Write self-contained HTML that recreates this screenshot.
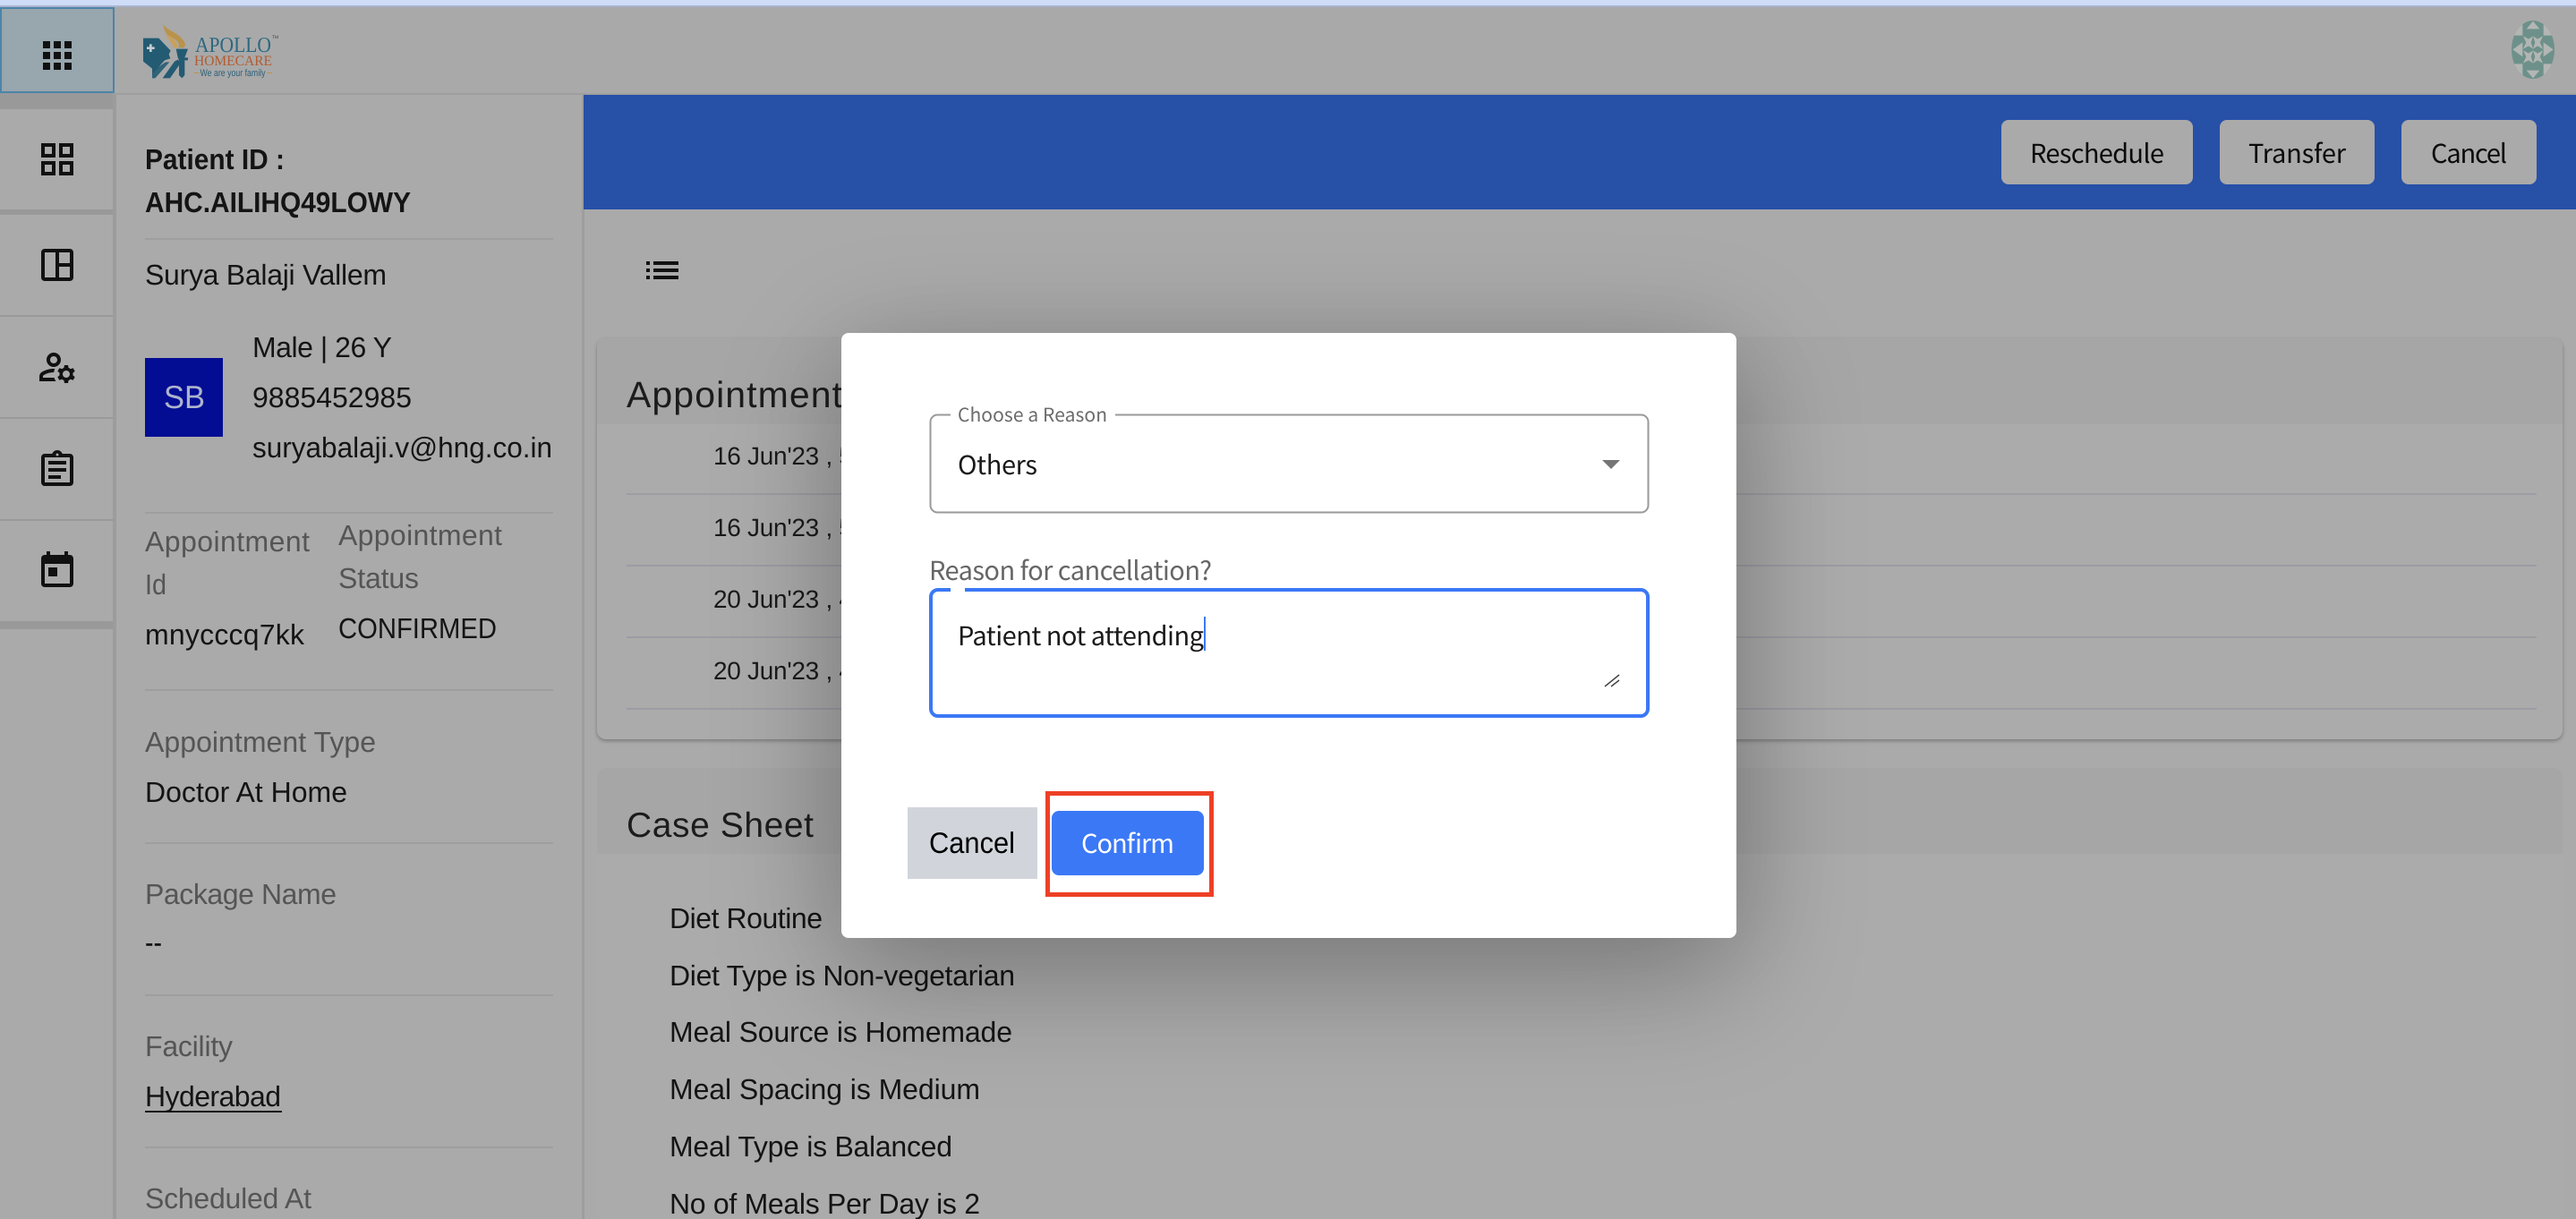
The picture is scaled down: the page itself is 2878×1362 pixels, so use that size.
<!DOCTYPE html>
<html><head><meta charset="utf-8"><title>Cancel appointment</title>
<style>
html,body{margin:0;padding:0;background:#aaa;width:2878px;height:1362px;overflow:hidden}
svg{display:block;overflow:hidden}
text{font-family:"Liberation Sans",sans-serif;font-size:32px;fill:#141414;text-rendering:geometricPrecision}
.b{font-weight:700}
.l{fill:#555}
.n{font-family:"Noto Sans CJK JP","Liberation Sans",sans-serif;font-size:29px}
.h{font-size:39px;fill:#1c1c1c}
.d{font-size:28px;fill:#1a1a1a}
</style></head><body>
<svg xmlns="http://www.w3.org/2000/svg" width="2878" height="1362" viewBox="0 0 2878 1362">
<defs>
<clipPath id="av"><ellipse cx="150" cy="137.5" rx="72" ry="97.5"/></clipPath>
<clipPath id="c1"><rect x="667" y="378" width="2196" height="448" rx="10"/></clipPath>
<clipPath id="c2"><path d="M667 868a10 10 0 0 1 10-10H2853a10 10 0 0 1 10 10V1362H667Z"/></clipPath>
</defs>
<rect width="2878" height="1362" fill="#aaa"/>
<rect width="2878" height="6" fill="#cfdcf7"/>
<rect y="6" width="2878" height="2" fill="#aab4cf"/>
<rect y="8" width="2878" height="96" fill="#a9a9a9"/>
<rect y="104" width="2878" height="2" fill="#9f9f9f"/>

<!-- sidebar -->
<rect x="0" y="104" width="126" height="1258" fill="#aaa"/>
<rect x="126" y="106" width="4" height="1256" fill="#9c9c9c"/>
<rect x="0" y="104" width="126" height="18" fill="#999"/>
<rect x="0" y="234" width="126" height="6" fill="#999"/>
<rect x="0" y="352" width="126" height="2" fill="#999"/>
<rect x="0" y="466" width="126" height="2" fill="#999"/>
<rect x="0" y="580" width="126" height="2" fill="#999"/>
<rect x="0" y="694" width="126" height="9" fill="#999"/>
<rect x="1" y="9" width="126" height="94" fill="#98a6ad" stroke="#4c84a8" stroke-width="2"/>
<g fill="#111">
<path transform="translate(40 38) scale(2)" d="M4 8h4V4H4v4zm6 12h4v-4h-4v4zm-6 0h4v-4H4v4zm0-6h4v-4H4v4zm6 0h4v-4h-4v4zm6-10v4h4V4h-4zm-6 4h4V4h-4v4zm6 6h4v-4h-4v4zm0 6h4v-4h-4v4z"/>
<path transform="translate(40 154) scale(2)" d="M3 3v8h8V3H3zm6 6H5V5h4v4zm-6 4v8h8v-8H3zm6 6H5v-4h4v4zm4-16v8h8V3h-8zm6 6h-4V5h4v4zm-6 4v8h8v-8h-8zm6 6h-4v-4h4v4z"/>
<path transform="translate(40 272) scale(2)" d="M19 3H5c-1.1 0-2 .9-2 2v14c0 1.1.9 2 2 2h14c1.1 0 2-.9 2-2V5c0-1.1-.9-2-2-2zM5 19V5h6v14H5zm14 0h-6v-6h6v6zm0-8h-6V5h6v6z"/>
<g transform="translate(40 386) scale(2)">
<path d="M4,18v-0.65c0-0.34,0.16-0.66,0.41-0.81C6.1,15.53,8.03,15,10,15c0.03,0,0.05,0,0.08,0.01c0.1-0.7,0.3-1.37,0.59-1.98 C10.45,13.01,10.23,13,10,13c-2.42,0-4.68,0.67-6.61,1.82C2.51,15.34,2,16.32,2,17.35V20h9.26c-0.42-0.6-0.75-1.28-0.97-2H4z"/>
<path d="M10,12c2.21,0,4-1.79,4-4s-1.79-4-4-4C7.79,4,6,5.79,6,8S7.79,12,10,12z M10,6c1.1,0,2,0.9,2,2s-0.9,2-2,2s-2-0.9-2-2 S8.9,6,10,6z"/>
<path d="M20.75,16c0-0.22-0.03-0.42-0.06-0.63l1.14-1.01l-1-1.73l-1.45,0.49c-0.32-0.27-0.68-0.48-1.08-0.63L18,11h-2l-0.3,1.49 c-0.4,0.15-0.76,0.36-1.08,0.63l-1.45-0.49l-1,1.73l1.14,1.01c-0.03,0.21-0.06,0.41-0.06,0.63s0.03,0.42,0.06,0.63l-1.14,1.01 l1,1.73l1.45-0.49c0.32,0.27,0.68,0.48,1.08,0.63L16,21h2l0.3-1.49c0.4-0.15,0.76-0.36,1.08-0.63l1.45,0.49l1-1.73l-1.14-1.01 C20.72,16.42,20.75,16.22,20.75,16z M17,18c-1.1,0-2-0.9-2-2s0.9-2,2-2s2,0.9,2,2S18.1,18,17,18z"/>
</g>
<path transform="translate(40 501) scale(2)" d="M7 15h7v2H7zm0-4h10v2H7zm0-4h10v2H7zm12-4h-4.18C14.4 1.84 13.3 1 12 1c-1.3 0-2.4.84-2.82 2H5c-.14 0-.27.01-.4.04-.39.08-.74.28-1.01.55-.18.18-.33.4-.43.64-.1.23-.16.49-.16.77v14c0 .27.06.54.16.78s.25.45.43.64c.27.27.62.47 1.01.55.13.02.26.03.4.03h14c1.1 0 2-.9 2-2V5c0-1.1-.9-2-2-2zm-7-.25c.41 0 .75.34.75.75s-.34.75-.75.75-.75-.34-.75-.75.34-.75.75-.75zM19 19H5V5h14v14z"/>
<path transform="translate(40 614) scale(2)" d="M19 3h-1V1h-2v2H8V1H6v2H5c-1.11 0-1.99.9-1.99 2L3 19c0 1.1.89 2 2 2h14c1.1 0 2-.9 2-2V5c0-1.1-.9-2-2-2zm0 16H5V8h14v11zM7 10h5v5H7z"/>
</g>

<!-- logo -->
<g transform="translate(140 10) scale(.33333)">
<path fill="#235b73" d="M60 98H112L152 140L146 152L151 166L132 172L90 218V200L60 176Z"/>
<path fill="#235b73" d="M90 208L135 178L148 178L100 232H90Z" opacity=".9"/>
<path fill="#235b73" d="M125 232L165 176L176 170L186 180L150 232Z"/>
<path fill="#235b73" d="M170 134H210L199 163H210V172H199V222L190 232L180 222V172L176 163Z"/>
<path fill="#b9934a" d="M127 47C130 70 170 75 190 100C205 115 201 125 196 130H178C186 110 165 100 146 90C131 82 128 60 127 47Z"/>
<path fill="#c9a05a" d="M137 85C155 98 172 100 176 130H160C160 110 140 105 137 85Z"/>
<path fill="#c6cbcf" d="M81 118H89V127H98V135H89V144H81V135H72V127H81Z"/>
</g>
<text x="218" y="58" style="font-family:'Liberation Serif',serif;font-size:24px;fill:#2c6880" textLength="85" lengthAdjust="spacingAndGlyphs">APOLLO</text>
<text x="217" y="73" style="font-family:'Liberation Serif',serif;font-size:16px;fill:#b25c2f" textLength="87" lengthAdjust="spacingAndGlyphs">HOMECARE</text>
<text x="223.500" y="85" style="font-size:11px;fill:#2c5f78" textLength="73" lengthAdjust="spacingAndGlyphs">We are your family</text>
<rect x="217" y="81" width="6" height="1" fill="#b9934a"/><rect x="298" y="81" width="6" height="1" fill="#b9934a"/>
<text x="304" y="43" style="font-size:5px;fill:#444">TM</text>

<!-- avatar -->
<g transform="translate(2806 23) scale(.3333) translate(-78 -40)" clip-path="url(#av)">
<rect x="78" y="40" width="144" height="195" fill="#6d918a"/>
<g fill="#b3b6b4">
<path d="M150 42L128 68H172Z"/><path d="M150 233L128 207H172Z"/>
<path d="M78 40H115V90H78Z"/><path d="M222 40H185V90H222Z"/>
<path d="M78 235H115V185H78Z"/><path d="M222 235H185V185H222Z"/>
<path d="M82 137L115 113V161Z"/><path d="M218 137L185 113V161Z"/>
<path d="M117 92L135 102L150 92L143 113L150 135L135 125L117 135L127 113Z"/>
<path d="M150 92L165 102L183 92L173 113L183 135L165 125L150 135L157 113Z"/>
<path d="M117 140L135 150L150 140L143 161L150 183L135 173L117 183L127 161Z"/>
<path d="M150 140L165 150L183 140L173 161L183 183L165 173L150 183L157 161Z"/>
</g></g>

<!-- left panel -->
<text class="b" x="162" y="189" textLength="156" lengthAdjust="spacingAndGlyphs">Patient ID :</text>
<text class="b" x="162" y="237" textLength="297" lengthAdjust="spacingAndGlyphs">AHC.AILIHQ49LOWY</text>
<rect x="162" y="266" width="456" height="2" fill="#9e9e9e"/>
<text x="162" y="318" textLength="270">Surya Balaji Vallem</text>
<rect x="162" y="400" width="87" height="88" fill="#020d94"/>
<text x="183" y="456" style="font-size:36px;fill:#aeb4cc" textLength="46" lengthAdjust="spacingAndGlyphs">SB</text>
<text x="282" y="399" textLength="156">Male | 26 Y</text>
<text x="282" y="455" textLength="178">9885452985</text>
<text x="282" y="511" textLength="335" lengthAdjust="spacingAndGlyphs">suryabalaji.v@hng.co.in</text>
<rect x="162" y="572" width="456" height="2" fill="#9e9e9e"/>
<text class="l" x="162" y="616" textLength="184">Appointment</text>
<text class="l" x="162" y="664" textLength="24" lengthAdjust="spacingAndGlyphs">Id</text>
<text x="162" y="720" textLength="178">mnycccq7kk</text>
<text class="l" x="378" y="609" textLength="183">Appointment</text>
<text class="l" x="378" y="657" textLength="90">Status</text>
<text x="378" y="713" textLength="177" lengthAdjust="spacingAndGlyphs">CONFIRMED</text>
<rect x="162" y="770" width="456" height="2" fill="#9e9e9e"/>
<text class="l" x="162" y="840" textLength="258">Appointment Type</text>
<text x="162" y="896" textLength="226">Doctor At Home</text>
<rect x="162" y="941" width="456" height="2" fill="#9e9e9e"/>
<text class="l" x="162" y="1010" textLength="214">Package Name</text>
<text x="162" y="1065" style="font-size:36px" textLength="19" lengthAdjust="spacingAndGlyphs">--</text>
<rect x="162" y="1111" width="456" height="2" fill="#9e9e9e"/>
<text class="l" x="162" y="1180" textLength="98">Facility</text>
<text x="162" y="1236" textLength="152">Hyderabad</text>
<rect x="162" y="1241" width="153" height="2" fill="#141414"/>
<rect x="162" y="1281" width="456" height="2" fill="#9e9e9e"/>
<text class="l" x="162" y="1350" textLength="186">Scheduled At</text>
<rect x="650" y="106" width="3" height="1256" fill="#9e9e9e"/>

<!-- blue bar -->
<rect x="652" y="106" width="2226" height="128" fill="#2750a7"/>
<rect x="2236" y="134" width="214" height="72" rx="8" fill="#aaa"/>
<rect x="2480" y="134" width="173" height="72" rx="8" fill="#aaa"/>
<rect x="2683" y="134" width="151" height="72" rx="8" fill="#aaa"/>
<text class="n" x="2268" y="182" style="fill:#0a0a0a" textLength="150">Reschedule</text>
<text class="n" x="2512" y="182" style="fill:#0a0a0a" textLength="109">Transfer</text>
<text class="n" x="2716" y="182" style="fill:#0a0a0a" textLength="85">Cancel</text>

<path fill="#111" transform="translate(716 278) scale(2)" d="M3 13h2v-2H3v2zm0 4h2v-2H3v2zm0-8h2V7H3v2zm4 4h14v-2H7v2zm0 4h14v-2H7v2zM7 7v2h14V7H7z"/>

<!-- card 1 -->
<rect x="667" y="378" width="2196" height="448" rx="10" fill="#ababab" style="filter:drop-shadow(0 2px 2px rgba(0,0,0,.28))"/>
<rect x="667" y="378" width="2196" height="96" fill="#a6a6a6" clip-path="url(#c1)"/>
<text class="h" x="700" y="455" style="font-size:41px" textLength="241">Appointment</text>
<text class="d" x="797" y="519" textLength="156">16 Jun'23 , 5</text>
<rect x="700" y="551" width="2134" height="2" fill="#9c9ca4"/>
<text class="d" x="797" y="599" textLength="156">16 Jun'23 , 5</text>
<rect x="700" y="631" width="2134" height="2" fill="#9c9ca4"/>
<text class="d" x="797" y="679" textLength="156">20 Jun'23 , 4</text>
<rect x="700" y="711" width="2134" height="2" fill="#9c9ca4"/>
<text class="d" x="797" y="759" textLength="156">20 Jun'23 , 4</text>
<rect x="700" y="791" width="2134" height="2" fill="#9c9ca4"/>

<!-- card 2 -->
<path d="M667 868a10 10 0 0 1 10-10H2853a10 10 0 0 1 10 10V1362H667Z" fill="#ababab"/>
<rect x="667" y="858" width="2196" height="96" fill="#a6a6a6" clip-path="url(#c2)"/>
<text class="h" x="700" y="935" textLength="209">Case Sheet</text>
<text x="748" y="1037" textLength="171">Diet Routine</text>
<text x="748" y="1101" textLength="386">Diet Type is Non-vegetarian</text>
<text x="748" y="1164" textLength="383">Meal Source is Homemade</text>
<text x="748" y="1228" textLength="347">Meal Spacing is Medium</text>
<text x="748" y="1292" textLength="316">Meal Type is Balanced</text>
<text x="748" y="1356" textLength="347">No of Meals Per Day is 2</text>

<!-- modal -->
<rect x="940" y="372" width="1000" height="676" rx="8" fill="#fff" style="filter:drop-shadow(0 44px 70px rgba(0,0,0,.2)) drop-shadow(0 14px 60px rgba(0,0,0,.15))"/>
<rect x="1039.500" y="463.500" width="802" height="109" rx="8" fill="#fff" stroke="#9a9a9a" stroke-width="2"/>
<rect x="1062" y="460" width="184" height="8" fill="#fff"/>
<text class="n" x="1070" y="471" style="font-size:21px;fill:#6b6b6b" textLength="167">Choose a Reason</text>
<text class="n" x="1070" y="530" style="fill:#1a1a1a" textLength="89">Others</text>
<path d="M1790 514H1810L1800 524Z" fill="#757575"/>
<text class="n" x="1038" y="648" style="fill:#666" textLength="316">Reason for cancellation?</text>
<rect x="1040" y="659" width="801" height="141" rx="8" fill="#fff" stroke="#3b78f6" stroke-width="4"/>
<rect x="1062" y="655" width="16" height="7" fill="#fff"/>
<text class="n" x="1070" y="721" style="fill:#1a1a1a" textLength="275">Patient not attending</text>
<rect x="1345" y="689" width="2" height="38" fill="#3b78f6"/>
<path d="M1793 767L1809 754M1800 767L1809 760" stroke="#444" stroke-width="1.500" fill="none"/>
<rect x="1014" y="902" width="145" height="80" fill="#d1d5db"/>
<text x="1038" y="953" style="font-size:33px;fill:#000" textLength="96" lengthAdjust="spacingAndGlyphs">Cancel</text>
<rect x="1175" y="906" width="170" height="72" rx="8" fill="#3b78f6"/>
<text class="n" x="1208" y="953" style="fill:#fff" textLength="104">Confirm</text>
<rect x="1170.500" y="886.500" width="183" height="113" fill="none" stroke="#ee4026" stroke-width="5"/>
</svg>
</body></html>
